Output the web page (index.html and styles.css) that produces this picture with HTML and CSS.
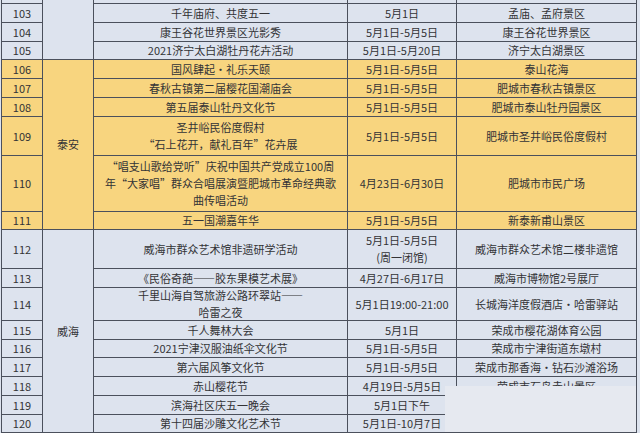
FILE: index.html
```html
<!DOCTYPE html>
<html lang="zh">
<head>
<meta charset="utf-8">
<title>五一活动表</title>
<link rel="stylesheet" href="styles.css">
</head>
<body>
<div class="wrap">
  <div class="grid">
    <div class="c b r0"></div>
    <div class="c b city r0 jn"></div>
    <div class="c b r0"></div>
    <div class="c b r0"></div>
    <div class="c b r0"></div>

    <div class="c b">103</div>
    <div class="c b">千年庙府、共度五一</div>
    <div class="c b">5月1日</div>
    <div class="c b">孟庙、孟府景区</div>

    <div class="c b">104</div>
    <div class="c b">康王谷花世界景区光影秀</div>
    <div class="c b">5月1日-5月5日</div>
    <div class="c b">康王谷花世界景区</div>

    <div class="c b">105</div>
    <div class="c b">2021济宁太白湖牡丹花卉活动</div>
    <div class="c b">5月1日-5月20日</div>
    <div class="c b">济宁太白湖景区</div>

    <div class="c y">106</div>
    <div class="c y city ta">泰安</div>
    <div class="c y">国风肆起·礼乐天颐</div>
    <div class="c y">5月1日-5月5日</div>
    <div class="c y">泰山花海</div>

    <div class="c y">107</div>
    <div class="c y">春秋古镇第二届樱花国潮庙会</div>
    <div class="c y">5月1日-5月5日</div>
    <div class="c y">肥城市春秋古镇景区</div>

    <div class="c y">108</div>
    <div class="c y">第五届泰山牡丹文化节</div>
    <div class="c y">5月1日-5月5日</div>
    <div class="c y">肥城市泰山牡丹园景区</div>

    <div class="c y">109</div>
    <div class="c y">圣井峪民俗度假村<br>“石上花开，献礼百年”花卉展</div>
    <div class="c y">5月1日-5月5日</div>
    <div class="c y">肥城市圣井峪民俗度假村</div>

    <div class="c y">110</div>
    <div class="c y">“唱支山歌给党听”庆祝中国共产党成立100周<br>年“大家唱”群众合唱展演暨肥城市革命经典歌<br>曲传唱活动</div>
    <div class="c y">4月23日-6月30日</div>
    <div class="c y">肥城市市民广场</div>

    <div class="c y">111</div>
    <div class="c y">五一国潮嘉年华</div>
    <div class="c y">5月1日-5月5日</div>
    <div class="c y">新泰新甫山景区</div>

    <div class="c b">112</div>
    <div class="c b city wh">威海</div>
    <div class="c b">威海市群众艺术馆非遗研学活动</div>
    <div class="c b">5月1日-5月5日<br>(周一闭馆)</div>
    <div class="c b">威海市群众艺术馆二楼非遗馆</div>

    <div class="c b">113</div>
    <div class="c b">《民俗奇葩——胶东果模艺术展》</div>
    <div class="c b">4月27日-6月17日</div>
    <div class="c b">威海市博物馆2号展厅</div>

    <div class="c b">114</div>
    <div class="c b">千里山海自驾旅游公路环翠站——<br>哈雷之夜</div>
    <div class="c b">5月1日19:00-21:00</div>
    <div class="c b">长城海洋度假酒店·哈雷驿站</div>

    <div class="c b">115</div>
    <div class="c b">千人舞林大会</div>
    <div class="c b">5月1日</div>
    <div class="c b">荣成市樱花湖体育公园</div>

    <div class="c b">116</div>
    <div class="c b">2021宁津汉服油纸伞文化节</div>
    <div class="c b">5月1日-5月5日</div>
    <div class="c b">荣成市宁津街道东墩村</div>

    <div class="c b">117</div>
    <div class="c b">第六届风筝文化节</div>
    <div class="c b">5月1日-5月5日</div>
    <div class="c b">荣成市那香海·钻石沙滩浴场</div>

    <div class="c b">118</div>
    <div class="c b">赤山樱花节</div>
    <div class="c b">4月19日-5月5日</div>
    <div class="c b">荣成市石岛赤山景区</div>

    <div class="c b">119</div>
    <div class="c b">滨海社区庆五一晚会</div>
    <div class="c b">5月1日下午</div>
    <div class="c b"></div>

    <div class="c b">120</div>
    <div class="c b">第十四届沙雕文化艺术节</div>
    <div class="c b">5月1日-10月7日</div>
    <div class="c b"></div>
  </div>
  <div class="patch"></div>
</div>
</body>
</html>
```

FILE: styles.css
```css
html, body {
  margin: 0;
  padding: 0;
  background: #dde3ee;
  overflow: hidden;
}

.wrap {
  position: relative;
  width: 640px;
  height: 433px;
}

.grid {
  display: grid;
  width: 636px;
  margin-left: 1px;
  box-sizing: border-box;
  padding: 0 1px 1px 1px;
  gap: 1px;
  background: #4b505c;
  grid-template-columns: 40px 50px 253px 108px 179px;
  grid-template-rows: 3px 18px 18px 17px 18px 18px 18px 38px 55px 17px 38px 18px 32px 18px 17px 18px 18px 18px 17px;
  font-family: "Noto Sans CJK SC", "Noto Sans", sans-serif;
  font-size: 11px;
  line-height: 17px;
  color: #333336;
}

.c {
  display: flex;
  align-items: center;
  justify-content: center;
  text-align: center;
  white-space: nowrap;
  overflow: hidden;
}

.b {
  background: #dde3ee;
}

.y {
  background: #f8d57f;
}

.city {
  grid-column: 2;
}

.jn {
  grid-row: 1 / 5;
}

.ta {
  grid-row: 5 / 11;
}

.wh {
  grid-row: 11 / 20;
}

.patch {
  position: absolute;
  left: 445px;
  top: 386px;
  width: 191px;
  height: 46px;
  background: #e6e9f0;
}
```
